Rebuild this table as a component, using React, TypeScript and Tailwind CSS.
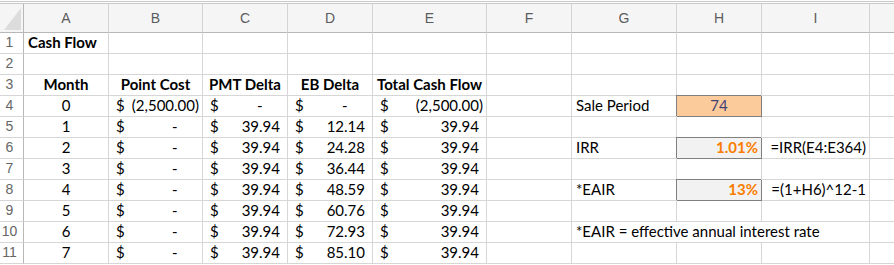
import React from "react";

type Cell = {
  text?: React.ReactNode;
  kind?: "text" | "center" | "bold" | "boldCenter" | "money" | "right" | "input" | "calc";
  span?: number;
};

const cols = ["A", "B", "C", "D", "E", "F", "G", "H", "I"];

const money = (v: string): Cell => ({ text: v, kind: "money" });

const months = [1, 2, 3, 4, 5, 6, 7];
const ebDelta = ["12.14", "24.28", "36.44", "48.59", "60.76", "72.93", "85.10"];

const side: Record<number, Cell[]> = {
  4: [{ text: "Sale Period" }, { text: "74", kind: "input" }, {}],
  6: [{ text: "IRR" }, { text: "1.01%", kind: "calc" }, { text: "=IRR(E4:E364)", kind: "right" }],
  8: [{ text: "*EAIR" }, { text: "13%", kind: "calc" }, { text: "=(1+H6)^12-1", kind: "right" }],
  10: [{ text: "*EAIR = effective annual interest rate", span: 3 }],
};

const emptySide: Cell[] = [{}, {}, {}];

const rows: Cell[][] = [
  [{ text: "Cash Flow", kind: "bold" }, {}, {}, {}, {}, {}, {}, {}, {}],
  [{}, {}, {}, {}, {}, {}, {}, {}, {}],
  [
    { text: "Month", kind: "boldCenter" },
    { text: "Point Cost", kind: "boldCenter" },
    { text: "PMT Delta", kind: "boldCenter" },
    { text: "EB Delta", kind: "boldCenter" },
    { text: "Total Cash Flow", kind: "boldCenter" },
    {},
    {},
    {},
    {},
  ],
  [
    { text: "0", kind: "center" },
    money("(2,500.00)"),
    money("-"),
    money("-"),
    money("(2,500.00)"),
    {},
    ...side[4],
  ],
  ...months.map((m, i) => [
    { text: String(m), kind: "center" } as Cell,
    money("-"),
    money("39.94"),
    money(ebDelta[i]),
    money("39.94"),
    {},
    ...(side[m + 4] ?? emptySide),
  ]),
];

const MoneyValue = ({ v }: { v: string }) => {
  if (v === "-")
    return (
      <span>
        -<span className="invisible">00)</span>
      </span>
    );
  if (v.startsWith("(")) return <span>{v}</span>;
  return (
    <span>
      {v}
      <span className="invisible">)</span>
    </span>
  );
};

const CellView = ({ cell }: { cell: Cell }) => {
  const base =
    "h-[21px] border-r border-b flex items-end pb-[2px] text-[15px] leading-[17px] whitespace-nowrap overflow-visible";
  const plain = "border-[#d6d6d6] text-black";
  const span = cell.span === 3 ? "col-span-3" : "";
  switch (cell.kind) {
    case "bold":
      return <div className={`${base} ${plain} px-[4px] font-bold`}>{cell.text}</div>;
    case "boldCenter":
      return <div className={`${base} ${plain} justify-center font-bold`}>{cell.text}</div>;
    case "center":
      return <div className={`${base} ${plain} justify-center`}>{cell.text}</div>;
    case "right":
      return <div className={`${base} ${plain} justify-end pr-[3px]`}>{cell.text}</div>;
    case "money":
      return (
        <div className={`${base} ${plain} justify-between pl-[7px] pr-[3px]`}>
          <span>$</span>
          <MoneyValue v={String(cell.text)} />
        </div>
      );
    case "input":
      return (
        <div
          className={`${base} justify-center bg-[#fccb9b] text-[#3f3f76] border-[#7f7f7f] shadow-[-1px_-1px_0_0_#7f7f7f]`}
        >
          {cell.text}
        </div>
      );
    case "calc":
      return (
        <div
          className={`${base} justify-end pr-[3px] bg-[#f2f2f2] text-[#fa7d00] font-bold border-[#7f7f7f] shadow-[-1px_-1px_0_0_#7f7f7f]`}
        >
          {cell.text}
        </div>
      );
    default:
      return <div className={`${base} ${plain} ${span} px-[4px]`}>{cell.text}</div>;
  }
};

export default function App() {
  return (
    <div className="w-[894px] h-[265px] overflow-hidden bg-white font-['Lato',sans-serif]">
      <div className="mt-[1px] h-[3px] border-y border-[#c8c8c8]" />
      <div className="grid grid-cols-[24px_85px_94px_85px_85px_114px_85px_105px_85px_108px_1fr]">
        {/* column header row */}
        <div className="relative h-[29px] bg-[#f5f5f5] border-r border-b border-[#b8b8b8]">
          <svg className="absolute right-[2px] bottom-[2px]" width="17" height="22" viewBox="0 0 17 22">
            <polygon points="0,22 17,0 17,22" fill="#dcdcdc" />
          </svg>
        </div>
        {cols.map((c) => (
          <div
            key={c}
            className="h-[29px] bg-[#f5f5f5] border-r border-b border-r-[#d4d4d4] border-b-[#b8b8b8] flex items-center justify-center text-[14px] text-[#5c5c5c] font-['Liberation_Sans',sans-serif]"
          >
            {c}
          </div>
        ))}
        <div className="h-[29px] bg-[#f5f5f5] border-b border-[#b8b8b8]" />

        {rows.map((row, ri) => (
          <React.Fragment key={ri}>
            <div className="h-[21px] border-r border-b border-r-[#b8b8b8] border-b-[#d6d6d6] flex items-end justify-center pr-[4px] pb-[3px] text-[14px] leading-[16px] text-[#666] font-['Liberation_Sans',sans-serif]">
              {ri + 1}
            </div>
            {row.map((cell, ci) => (
              <CellView key={ci} cell={cell} />
            ))}
            <div className="h-[21px] border-b border-[#d6d6d6]" />
          </React.Fragment>
        ))}
      </div>
    </div>
  );
}
